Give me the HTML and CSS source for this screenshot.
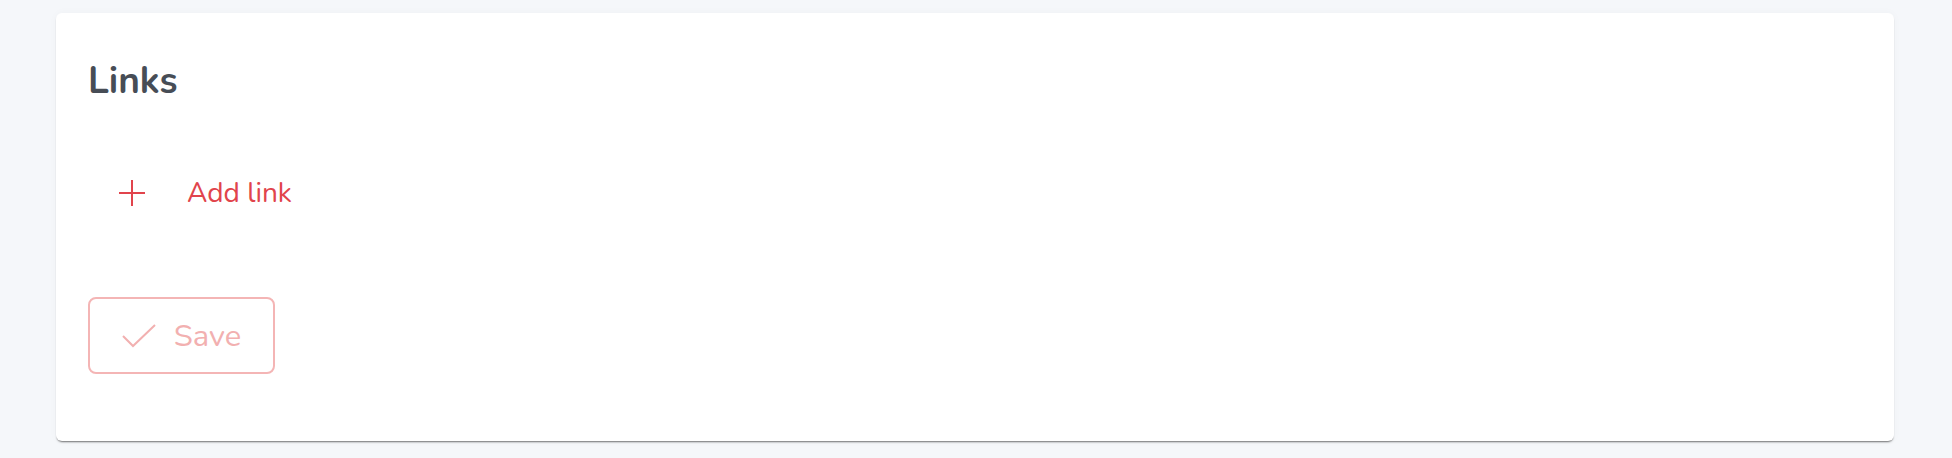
FILE: index.html
```html
<!DOCTYPE html>
<html lang="en">
<head>
  <meta charset="UTF-8">
  <title>Links</title>
  <link rel="stylesheet" href="styles.css">
</head>
<body>
  <div class="card">
    <h2 class="card-title">Links</h2>

    <button class="add-link" type="button">
      <svg class="icon-plus" width="26" height="26" viewBox="0 0 26 26">
        <path d="M13 0v26M0 13h26" stroke="currentColor" stroke-width="2" fill="none"/>
      </svg>
      <span>Add link</span>
    </button>

    <button class="save" type="button" disabled>
      <svg class="icon-check" width="34" height="24" viewBox="0 0 34 24">
        <polyline points="1,12 11,22 33,1" stroke="currentColor" stroke-width="2" fill="none"/>
      </svg>
      <span>Save</span>
    </button>
  </div>
</body>
</html>
```

FILE: styles.css
```css
body {
  margin: 0;
  padding: 13px 58px 18px 56px;
  background-color: #f5f7fa;
  font-family: "Nunito", "Lato", "Noto Sans", sans-serif;
}
.card {
  background-color: #fff;
  border-radius: 6px;
  padding: 32px 32px 67px;
  box-shadow: 0 2px 2px -1px rgba(0, 0, 0, 0.55), 0 0 8px rgba(0, 0, 0, 0.03);
  display: flex;
  flex-direction: column;
  align-items: flex-start;
}
.card-title {
  margin: 14px 0 0;
  font-size: 37px;
  line-height: 44px;
  font-weight: 700;
  color: #474d56;
}
.add-link {
  margin-top: 62px;
  height: 56px;
  padding: 0 0 0 31px;
  display: flex;
  align-items: center;
  gap: 42px;
  background: none;
  border: none;
  font-family: inherit;
  font-size: 28px;
  color: #e1444c;
  cursor: pointer;
}
.icon-plus {
  display: block;
}
.save {
  margin-top: 76px;
  width: 187px;
  height: 77px;
  display: flex;
  align-items: center;
  justify-content: center;
  gap: 18px;
  background: #fff;
  border: 2px solid #f4b5b5;
  border-radius: 8px;
  font-family: inherit;
  font-size: 31px;
  color: #f2b0b0;
}
.icon-check {
  display: block;
}
```
